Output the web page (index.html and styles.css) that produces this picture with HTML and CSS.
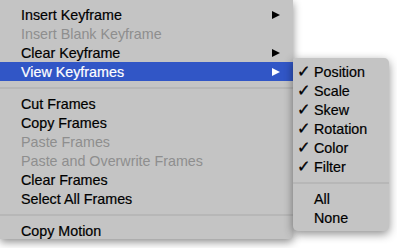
FILE: index.html
```html
<!DOCTYPE html>
<html>
<head>
<meta charset="utf-8">
<link rel="stylesheet" href="styles.css">
</head>
<body>
<div class="stage">
  <div class="menu">
    <div class="item"><span class="label">Insert Keyframe</span><span class="arrow"></span></div>
    <div class="item disabled"><span class="label">Insert Blank Keyframe</span></div>
    <div class="item"><span class="label">Clear Keyframe</span><span class="arrow"></span></div>
    <div class="item active"><span class="label">View Keyframes</span><span class="arrow"></span></div>
    <div class="sep"></div>
    <div class="item"><span class="label">Cut Frames</span></div>
    <div class="item"><span class="label">Copy Frames</span></div>
    <div class="item disabled"><span class="label">Paste Frames</span></div>
    <div class="item disabled"><span class="label">Paste and Overwrite Frames</span></div>
    <div class="item"><span class="label">Clear Frames</span></div>
    <div class="item"><span class="label">Select All Frames</span></div>
    <div class="sep"></div>
    <div class="item"><span class="label">Copy Motion</span></div>
  </div>
  <div class="submenu">
    <div class="sub-item"><span class="check">✓</span><span class="label">Position</span></div>
    <div class="sub-item"><span class="check">✓</span><span class="label">Scale</span></div>
    <div class="sub-item"><span class="check">✓</span><span class="label">Skew</span></div>
    <div class="sub-item"><span class="check">✓</span><span class="label">Rotation</span></div>
    <div class="sub-item"><span class="check">✓</span><span class="label">Color</span></div>
    <div class="sub-item"><span class="check">✓</span><span class="label">Filter</span></div>
    <div class="sep"></div>
    <div class="sub-item"><span class="check"></span><span class="label">All</span></div>
    <div class="sub-item"><span class="check"></span><span class="label">None</span></div>
  </div>
</div>
</body>
</html>
```
FILE: styles.css
```css
html, body {
  margin: 0;
  padding: 0;
  background: #ffffff;
}

body {
  font-family: "Liberation Sans", Arial, sans-serif;
  font-size: 14.3px;
  color: #000;
  -webkit-text-stroke: 0.2px;
}

.stage {
  position: relative;
  width: 397px;
  height: 248px;
  overflow: hidden;
}

.menu {
  width: 293px;
  height: 239px;
  box-sizing: border-box;
  padding-top: 5px;
  background: #c4c4c4;
  border-bottom-right-radius: 4px;
  box-shadow: 0 3px 8px rgba(0, 0, 0, 0.45);
}

.item {
  height: 19px;
  display: flex;
  align-items: center;
  padding-left: 21px;
  padding-right: 13px;
  white-space: nowrap;
}

.item .label {
  flex: 1;
}

.item.disabled {
  color: #8e8e8e;
  -webkit-text-stroke: 0;
}

.item.active {
  background: #3156c6;
  color: #fff;
}

.arrow {
  width: 0;
  height: 0;
  border-left: 8px solid #000;
  border-top: 4.5px solid transparent;
  border-bottom: 4.5px solid transparent;
}

.item.active .arrow {
  border-left-color: #fff;
}

.sep {
  height: 13px;
  display: flex;
  align-items: center;
}

.sep::before {
  content: "";
  display: block;
  width: 100%;
  height: 2px;
  background: #b7b7b7;
}

.submenu {
  position: absolute;
  left: 293px;
  top: 58px;
  width: 96px;
  box-sizing: border-box;
  padding: 4px 0;
  background: #c4c4c4;
  border-radius: 2px 5px 5px 5px;
  box-shadow: 0 3px 10px rgba(0, 0, 0, 0.45);
}

.sub-item {
  height: 19px;
  display: flex;
  align-items: center;
  padding-left: 4px;
  white-space: nowrap;
}

.check {
  width: 17px;
  font-family: "DejaVu Sans", sans-serif;
  font-size: 16px;
  -webkit-text-stroke: 0.4px;
}
```
